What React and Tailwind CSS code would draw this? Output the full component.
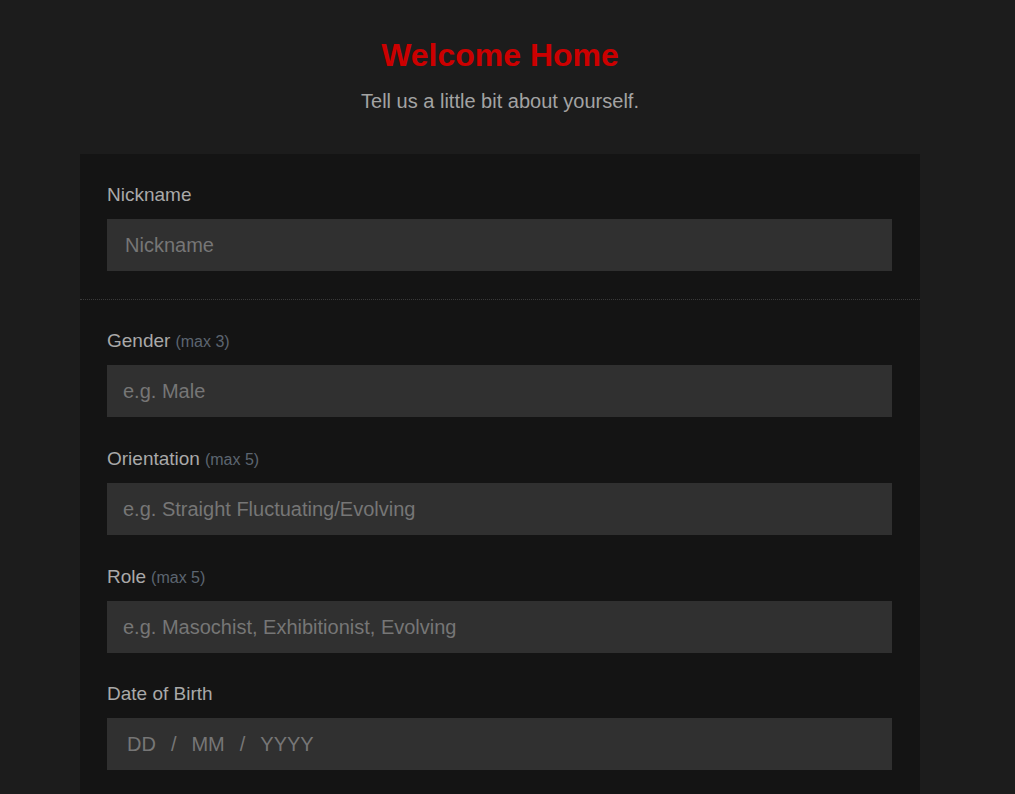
function Label({ children, hint }) {
  return (
    <label className="block text-[19px] leading-6 text-[#a9a9a9] mb-3">
      {children}
      {hint && <span className="text-[16px] leading-none text-[#5c6570] ml-[5px]">{hint}</span>}
    </label>
  );
}

function TextInput({ placeholder, pad = "pl-[16px]" }) {
  return (
    <input
      type="text"
      placeholder={placeholder}
      className={`block w-full h-[52px] bg-[#303030] ${pad} pr-4 text-[20px] text-[#cfcfcf] placeholder:text-[#767676] outline-none border-0`}
    />
  );
}

function App() {
  const fields = [
    { label: "Gender", hint: "(max 3)", placeholder: "e.g. Male" },
    { label: "Orientation", hint: "(max 5)", placeholder: "e.g. Straight Fluctuating/Evolving" },
    { label: "Role", hint: "(max 5)", placeholder: "e.g. Masochist, Exhibitionist, Evolving" },
  ];

  return (
    <div className="h-screen overflow-hidden bg-[#1c1c1c] font-['Liberation_Sans',Arial,sans-serif]">
      <div className="w-[1000px]">
        <div className="pt-[35px] text-center">
          <h1 className="text-[32px] leading-10 font-bold text-[#cc0000]">Welcome Home</h1>
          <p className="mt-[12px] text-[20px] leading-7 text-[#a3a3a3]">
            Tell us a little bit about yourself.
          </p>
        </div>

        <div className="mt-[39px] ml-[80px] w-[840px] bg-[#141414]">
          <div className="pt-[29px] pb-[28px] pl-[27px] pr-[28px] border-b border-dotted border-[#3a3a3a]">
            <Label>Nickname</Label>
            <TextInput placeholder="Nickname" pad="pl-[18px]" />
          </div>

          <div className="pt-[29px] pb-10 pl-[27px] pr-[28px] flex flex-col gap-[30px]">
            {fields.map((f) => (
              <div key={f.label}>
                <Label hint={f.hint}>{f.label}</Label>
                <TextInput placeholder={f.placeholder} />
              </div>
            ))}
            <div className="-mt-px">
              <Label>Date of Birth</Label>
              <div className="flex items-center h-[52px] bg-[#303030] pl-[20px] text-[20px] text-[#767676]">
                <span>DD</span>
                <span className="ml-[15px]">/</span>
                <span className="ml-[15px]">MM</span>
                <span className="ml-[15px]">/</span>
                <span className="ml-[15px]">YYYY</span>
              </div>
            </div>
          </div>
        </div>
      </div>
    </div>
  );
}

export default App;
